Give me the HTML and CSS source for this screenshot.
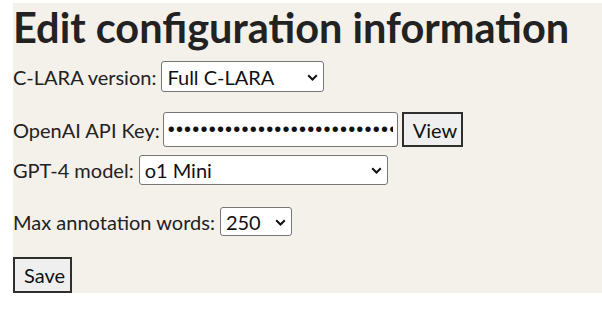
FILE: index.html
```html
<!DOCTYPE html>
<html lang="en">
<head>
  <meta charset="UTF-8" />
  <meta name="viewport" content="width=device-width, initial-scale=1.0"/>
  <title>Edit configuration information</title>
  <link rel="stylesheet" href="styles.css">
</head>
<body>
  <div class="page">
    <h1 class="title">Edit configuration information</h1>

    <form class="config-form">
      <div class="field field-version">
        <label for="version">C-LARA version:</label>
        <span class="select-wrap">
          <select id="version" class="select-version">
            <option>Full C-LARA</option>
            <option>Simple C-LARA</option>
          </select>
          <svg class="chevron" width="11" height="7" viewBox="0 0 11 7"><path d="M1.2 1.2l4.3 4.3 4.3-4.3" fill="none" stroke="#111" stroke-width="2"/></svg>
        </span>
      </div>

      <div class="field field-key">
        <label for="api-key">OpenAI API Key:</label>
        <input id="api-key" class="key-input" type="password" value="sk-proj-abcdefghijklmnopqrstuvwxyz0123456789ABCDEFGH">
        <button type="button" class="btn btn-view">View</button>
      </div>

      <div class="field field-model">
        <label for="model">GPT-4 model:</label>
        <span class="select-wrap">
          <select id="model" class="select-model">
            <option>o1 Mini</option>
            <option>gpt-4o</option>
          </select>
          <svg class="chevron" width="11" height="7" viewBox="0 0 11 7"><path d="M1.2 1.2l4.3 4.3 4.3-4.3" fill="none" stroke="#111" stroke-width="2"/></svg>
        </span>
      </div>

      <div class="field field-words">
        <label for="words">Max annotation words:</label>
        <span class="select-wrap">
          <select id="words" class="select-words">
            <option>250</option>
            <option>500</option>
          </select>
          <svg class="chevron" width="11" height="7" viewBox="0 0 11 7"><path d="M1.2 1.2l4.3 4.3 4.3-4.3" fill="none" stroke="#111" stroke-width="2"/></svg>
        </span>
      </div>

      <div class="field field-save">
        <button type="submit" class="btn btn-save">Save</button>
      </div>
    </form>
  </div>
</body>
</html>
```
FILE: styles.css
```css
body {
  margin: 3px 0 0 13px;
  background: #fff;
  font-family: Lato, "Open Sans", sans-serif;
  font-size: 20px;
  color: #222;
}
.page {
  background-color: #f4f0ea;
}
.title {
  margin: 0;
  font-size: 41.5px;
  line-height: 48px;
  font-weight: bold;
  color: #222;
}
.config-form {
  display: flex;
  flex-direction: column;
  padding-top: 10px;
}
.field {
  display: flex;
  align-items: baseline;
  gap: 5px;
}
.field-key {
  margin-top: 20px;
  gap: 3px;
  align-items: center;
}
.field-model {
  margin-top: 8px;
}
.field-words {
  margin-top: 22px;
}
.field-save {
  margin-top: 21px;
}
label {
  white-space: nowrap;
}
select, input, .btn {
  font-family: inherit;
  font-size: 20px;
  color: #111;
  box-sizing: border-box;
}
.select-wrap {
  position: relative;
  display: inline-flex;
}
select {
  appearance: none;
  -webkit-appearance: none;
  background: #fff;
  border: 1px solid #767676;
  border-radius: 3px;
  padding: 0 0 0 5px;
  margin: 0;
}
.chevron {
  position: absolute;
  right: 6px;
  top: 50%;
  margin-top: -3px;
  pointer-events: none;
}
.select-version {
  width: 163px;
  height: 31px;
}
.select-model {
  width: 249px;
  height: 30px;
}
.select-words {
  width: 72px;
  height: 29px;
}
.key-input {
  width: 235px;
  height: 35px;
  margin: 0;
  padding: 0 4px;
  border: 1px solid #767676;
  border-radius: 3px;
  background: #fff;
  font-family: "Liberation Sans", sans-serif;
  letter-spacing: 1.2px;
}
.btn {
  background-color: #efefef;
  border: 2px solid #2e2e2e;
  border-radius: 0;
  padding: 0 9px;
  margin: 0;
  cursor: pointer;
}
.btn-view {
  width: 61px;
  height: 35px;
  margin-left: 1px;
}
.btn-save {
  width: 59px;
  height: 36px;
}
```
